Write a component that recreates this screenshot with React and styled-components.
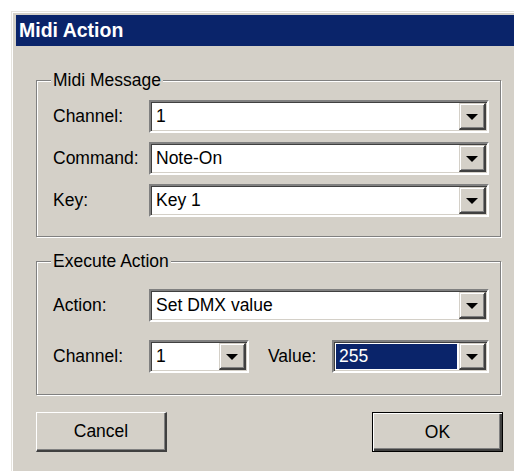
import styled, { createGlobalStyle } from "styled-components";

const GlobalStyle = createGlobalStyle`
  html, body {
    margin: 0;
    padding: 0;
    background: #ffffff;
    overflow: hidden;
  }
  body {
    font-family: 'Liberation Sans', Arial, sans-serif;
  }
`;

const Window = styled.div`
  margin: 11px 0 0 11px;
  height: 460px;
  background: #d4d0c8;
  border-left: 1px solid #e6e4df;
  border-top: 1px solid #e6e4df;
  box-shadow: inset 1px 1px 0 #ffffff;
  padding: 3px 0 0 4px;
  box-sizing: border-box;
`;

const TitleBar = styled.div`
  height: 31px;
  background: #0a246a;
  color: #ffffff;
  display: flex;
  align-items: center;
  padding-left: 3px;
  font-family: 'Liberation Sans', Arial, sans-serif;
  font-weight: bold;
  font-size: 19.5px;
`;

const Content = styled.div`
  width: 466px;
  margin-left: 20px;
  padding-top: 24px;
  font-size: 17.5px;
  color: #000000;
`;

const Group = styled.fieldset`
  margin: ${(p) => p.$gapTop || 0}px 0 0 0;
  width: 465px;
  box-sizing: border-box;
  border: 1px solid #808080;
  box-shadow: 1px 1px 0 #ffffff, inset 1px 1px 0 #ffffff;
  padding: ${(p) => p.$padTop}px 11px ${(p) => p.$padBottom}px 16px;
  display: flex;
  flex-direction: column;
  gap: ${(p) => p.$rowGap}px;
`;

const Legend = styled.legend`
  padding: 0 2px;
  margin-left: -2px;
  line-height: 20px;
  font-size: 17.5px;
  background: #d4d0c8;
`;

const Row = styled.div`
  display: flex;
  align-items: center;
  height: 33px;
`;

const Label = styled.span`
  width: ${(p) => p.$width || 96}px;
  padding-left: ${(p) => p.$indent || 0}px;
  box-sizing: border-box;
  flex: none;
  white-space: nowrap;
`;

const Field = styled.div`
  width: ${(p) => p.$width}px;
  height: 33px;
  box-sizing: border-box;
  flex: none;
  display: flex;
  background: #ffffff;
  border-style: solid;
  border-width: 2px;
  border-color: #808080 #ffffff #ffffff #808080;
  box-shadow: inset 1px 1px 0 #404040, inset -1px -1px 0 #d4d0c8;
  padding: 1px;
`;

const FieldText = styled.div`
  flex: 1;
  display: flex;
  align-items: center;
  padding-left: 3px;
  margin: 1px 2px 1px 1px;
  white-space: nowrap;
  overflow: hidden;
  background: ${(p) => (p.$selected ? "#0a246a" : "transparent")};
  color: ${(p) => (p.$selected ? "#ffffff" : "#000000")};
`;

const DropButton = styled.div`
  width: 27px;
  flex: none;
  box-sizing: border-box;
  display: flex;
  align-items: center;
  justify-content: center;
  background: #d4d0c8;
  border-style: solid;
  border-width: 1px 2px 2px 1px;
  border-color: #d4d0c8 #404040 #404040 #d4d0c8;
  box-shadow: inset 1px 1px 0 #ffffff, inset -1px -1px 0 #808080;
`;

const Arrow = styled.span`
  width: 0;
  height: 0;
  border-left: 6px solid transparent;
  border-right: 6px solid transparent;
  border-top: 6px solid #000000;
  margin-top: 1px;
`;

const ButtonRow = styled.div`
  display: flex;
  justify-content: space-between;
  margin-top: 17px;
  width: 467px;
`;

const Button = styled.button`
  width: 131px;
  height: 40px;
  box-sizing: border-box;
  padding: 0;
  font-family: 'Liberation Sans', Arial, sans-serif;
  font-size: 17.5px;
  color: #000000;
  background: #d4d0c8;
  border-style: solid;
  border-width: 1px 2px 2px 1px;
  border-color: #ffffff #404040 #404040 #ffffff;
  box-shadow: inset -1px -1px 0 #808080;
  outline: none;
  ${(p) =>
    p.$default &&
    `
    border-color: #000000;
    border-width: 1px;
    box-shadow: inset 1px 1px 0 #ffffff, inset -2px -2px 0 #404040, inset -3px -3px 0 #808080;
  `}
`;

const Combo = ({ width, value, selected }) => (
  <Field $width={width}>
    <FieldText $selected={selected}>{value}</FieldText>
    <DropButton>
      <Arrow />
    </DropButton>
  </Field>
);

const App = () => (
  <>
    <GlobalStyle />
    <Window>
      <TitleBar>Midi Action</TitleBar>
      <Content>
        <Group $padTop={10} $padBottom={19} $rowGap={9}>
          <Legend>Midi Message</Legend>
          <Row>
            <Label>Channel:</Label>
            <Combo width={340} value="1" />
          </Row>
          <Row>
            <Label>Command:</Label>
            <Combo width={340} value="Note-On" />
          </Row>
          <Row>
            <Label>Key:</Label>
            <Combo width={340} value="Key 1" />
          </Row>
        </Group>

        <Group $gapTop={14} $padTop={18} $padBottom={21} $rowGap={18}>
          <Legend>Execute Action</Legend>
          <Row>
            <Label>Action:</Label>
            <Combo width={340} value="Set DMX value" />
          </Row>
          <Row>
            <Label>Channel:</Label>
            <Combo width={100} value="1" />
            <Label $width={83} $indent={19}>
              Value:
            </Label>
            <Combo width={157} value="255" selected />
          </Row>
        </Group>

        <ButtonRow>
          <Button>Cancel</Button>
          <Button $default>OK</Button>
        </ButtonRow>
      </Content>
    </Window>
  </>
);

export default App;
